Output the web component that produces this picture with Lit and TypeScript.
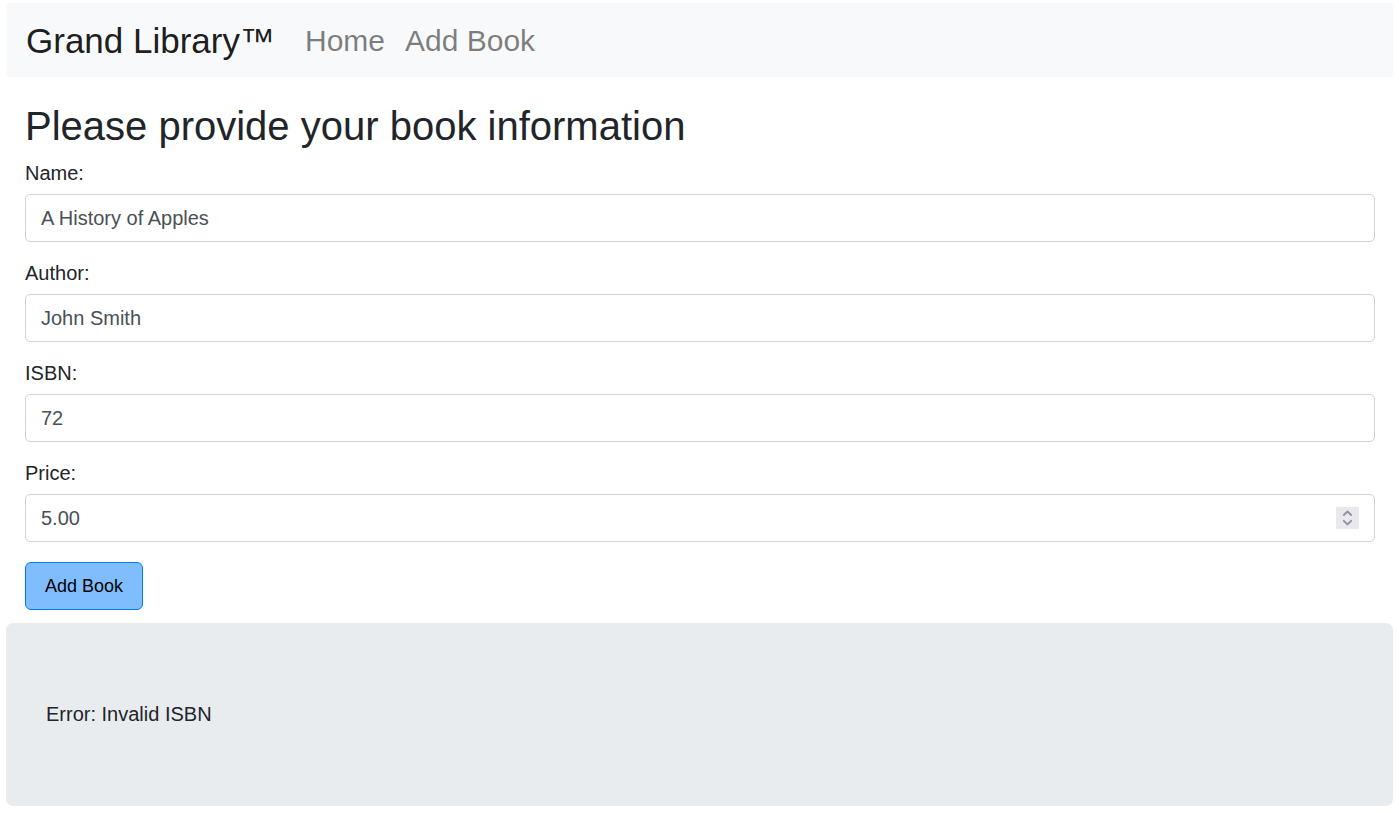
import { LitElement, html, css } from "lit";
import { customElement } from "lit/decorators.js";

@customElement("app-root")
export class AppRoot extends LitElement {
  static styles = css`
    :host {
      display: block;
      padding: 3px 6px 7px;
      background: #fff;
      color: #212529;
      font-family: "Liberation Sans", Arial, sans-serif;
      font-size: 20px;
      line-height: 30px;
    }
    * { box-sizing: border-box; }
    .navbar {
      display: flex;
      align-items: center;
      gap: 30px;
      padding: 11px 20px 9px;
      background: #f8f9fa;
    }
    .brand {
      color: rgba(0, 0, 0, 0.9);
      font-size: 35px;
      line-height: 54px;
      text-decoration: none;
    }
    .links {
      display: flex;
      gap: 20px;
      margin: 0;
      padding: 0;
      list-style: none;
    }
    .link {
      color: rgba(0, 0, 0, 0.5);
      font-size: 30px;
      line-height: 54px;
      text-decoration: none;
    }
    form { padding: 25px 18px 13px 19px; }
    h1 {
      margin: 0 0 8px;
      font-size: 40px;
      font-weight: 400;
      line-height: 48px;
    }
    .group { margin-bottom: 16px; }
    label { display: block; margin-bottom: 6px; }
    .control { position: relative; }
    input {
      display: block;
      width: 100%;
      height: 48px;
      margin: 0;
      padding: 8px 15px;
      border: 1px solid #ced4da;
      border-radius: 5px;
      background: #fff;
      color: #495057;
      font: inherit;
      appearance: textfield;
    }
    input::-webkit-inner-spin-button { appearance: none; margin: 0; }
    .spinner {
      position: absolute;
      top: 13px;
      right: 16px;
      width: 23px;
      height: 22px;
      pointer-events: none;
    }
    button {
      display: block;
      height: 48px;
      margin-top: 20px;
      padding: 0 19px;
      border: 1px solid #007bff;
      border-radius: 6px;
      background: #80bdff;
      color: #000;
      font: inherit;
      font-size: 18px;
    }
    .message {
      padding: 76px 40px 77px;
      border-radius: 7px;
      background: #e9ecef;
    }
    .message p { margin: 0; }
  `;

  private submit(e: Event) {
    e.preventDefault();
  }

  render() {
    return html`
      <nav class="navbar">
        <a class="brand" href="#">Grand Library™</a>
        <ul class="links">
          <li><a class="link" href="#">Home</a></li>
          <li><a class="link" href="#">Add Book</a></li>
        </ul>
      </nav>
      <form @submit=${this.submit}>
        <h1>Please provide your book information</h1>
        <div class="group">
          <label for="name">Name:</label>
          <input id="name" type="text" value="A History of Apples" />
        </div>
        <div class="group">
          <label for="author">Author:</label>
          <input id="author" type="text" value="John Smith" />
        </div>
        <div class="group">
          <label for="isbn">ISBN:</label>
          <input id="isbn" type="text" value="72" />
        </div>
        <div class="group">
          <label for="price">Price:</label>
          <div class="control">
            <input id="price" type="number" step="0.01" value="5.00" />
            <svg class="spinner" viewBox="0 0 23 22" aria-hidden="true">
              <rect width="23" height="22" fill="#e9e9ed" />
              <path
                d="M7.8 8l3.7-3.5L15.2 8M7.8 13.8l3.7 3.5 3.7-3.5"
                fill="none"
                stroke="#8f8f9d"
                stroke-width="1.8"
                stroke-linecap="round"
                stroke-linejoin="round"
              />
            </svg>
          </div>
        </div>
        <button type="submit">Add Book</button>
      </form>
      <section class="message" role="alert"><p>Error: Invalid ISBN</p></section>
    `;
  }
}
